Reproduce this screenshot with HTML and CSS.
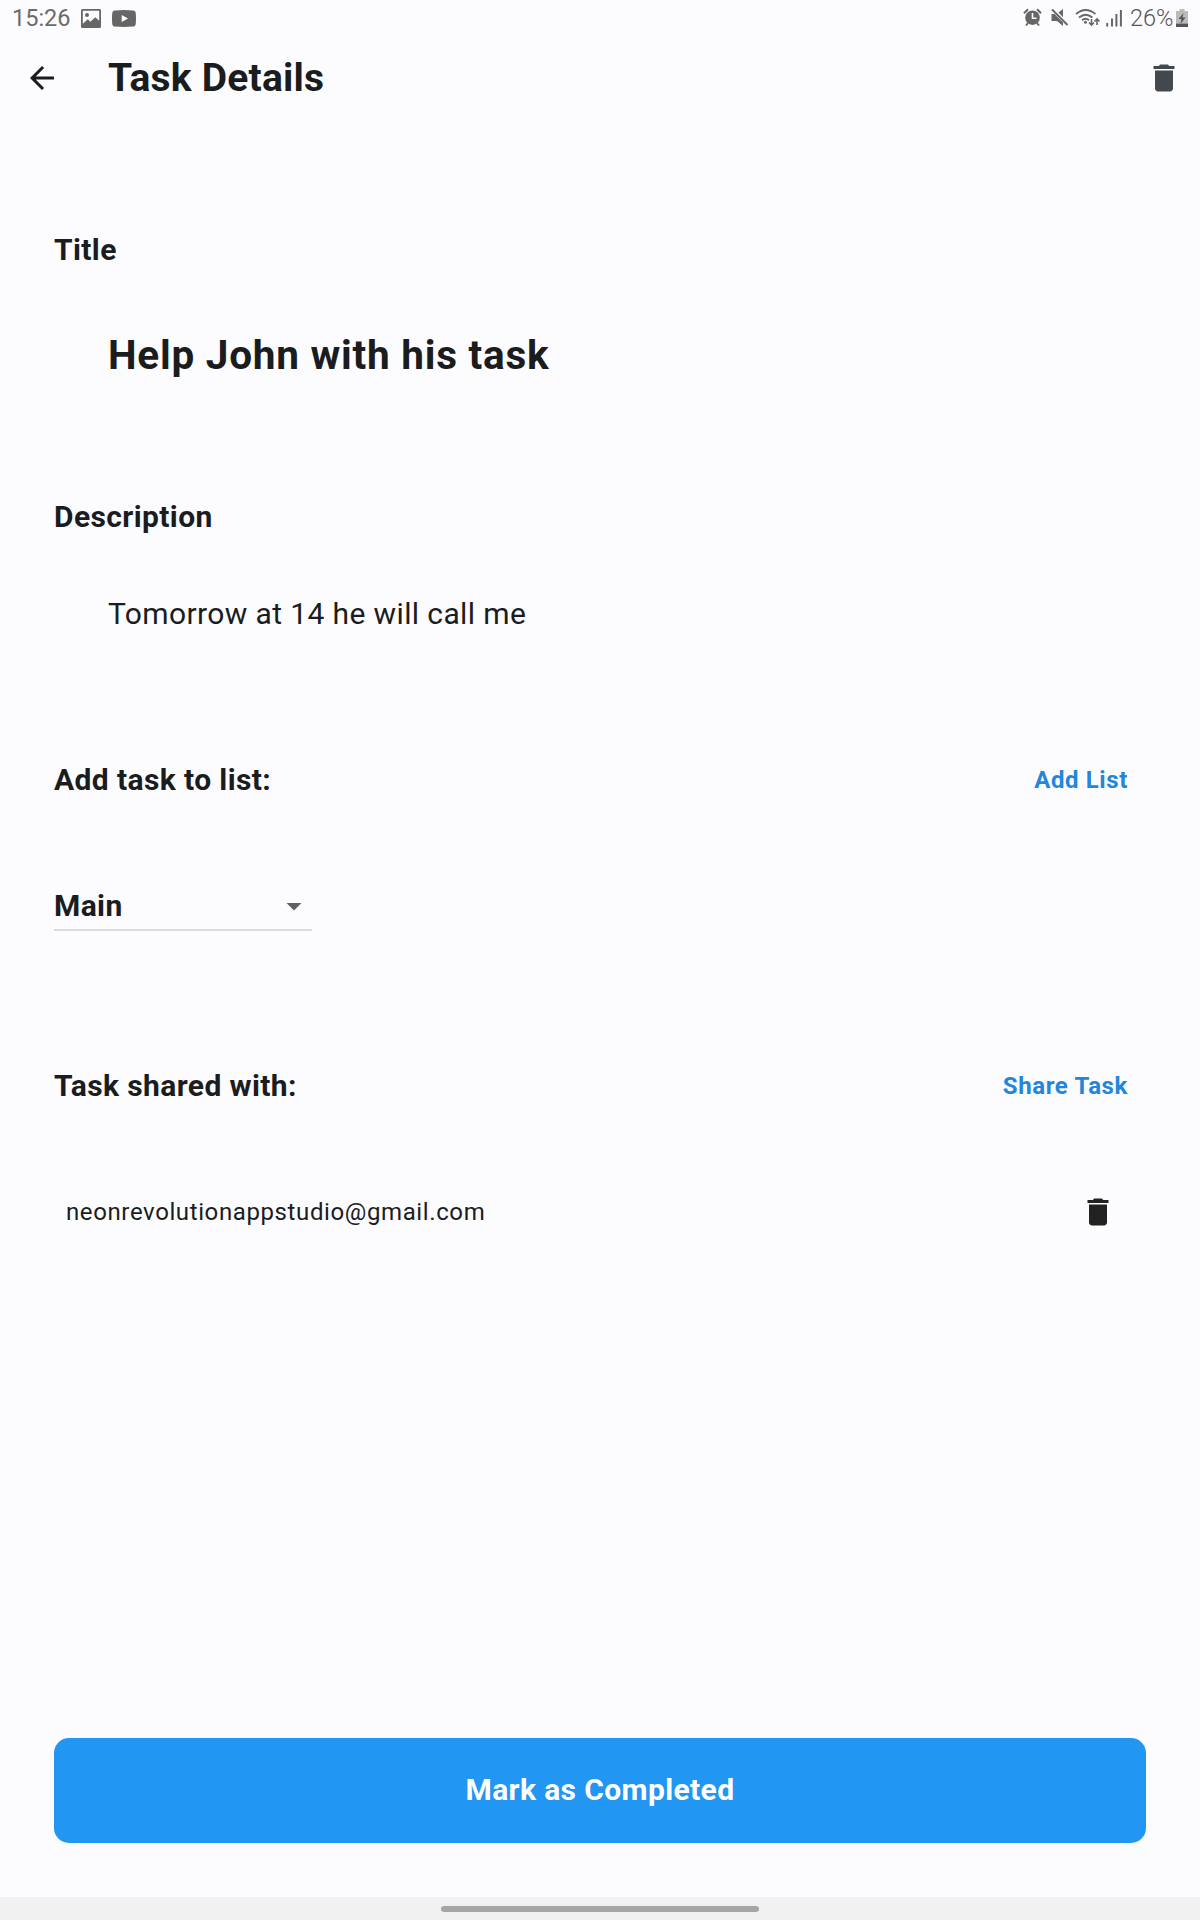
FILE: index.html
```
<!DOCTYPE html>
<html lang="en">
<head>
<meta charset="utf-8">
<title>Task Details</title>
<link rel="stylesheet" href="styles.css">
</head>
<body>
<div class="screen">
  <div class="status">
    <span class="clock">15:26</span>
    <svg class="ic-photo" width="20" height="19" viewBox="0 0 20 19"><path fill="#666" fill-rule="evenodd" d="M1.500 0h17A1.500 1.500 0 0 1 20 1.500v16a1.500 1.500 0 0 1-1.500 1.500h-17A1.500 1.500 0 0 1 0 17.500v-16A1.500 1.500 0 0 1 1.500 0zM1.800 1.800v13l5-4.600 2.500 2.500 5-4.500 3.900 3.600v-10zM6 4a2 2 0 1 1 0 4 2 2 0 0 1 0-4z"/></svg>
    <svg class="ic-video" width="24" height="17" viewBox="0 0 24 17"><path fill="#666" fill-rule="evenodd" d="M3 .4Q12-.4 21 .4q2.600.2 2.800 3 .4 5 0 10-.2 2.900-2.800 3.200-9 .8-18 0-2.600-.3-2.800-3.200-.4-5 0-10Q.4.600 3 .4zM9.700 5v7l6.300-3.500z"/></svg>
    <span class="grow"></span>
    <svg width="106" height="36" viewBox="1018 0 106 36">
      <g fill="none" stroke="#666" stroke-width="1.600">
        <circle cx="1032.500" cy="17.700" r="7.300" fill="#666" stroke="none"/>
        <path stroke="#fcfcff" d="M1032.500 13V18.300H1036.500"/>
        <path d="M1024 13.200l4-4M1041 13.200l-4-4M1028 23l-2 2.500M1037 23l2 2.500" stroke-width="2"/>
        <path fill="#666" stroke="none" d="M1063 9v8l-4.500-4.500zM1051.500 14h3l8.500 8.500v3.500l-6-5h-5.500z"/>
        <path d="M1052 9.500l15.500 15.500" stroke-width="2"/>
        <path d="M1076 14q9.700-8 19.400 0M1079 17.500q6.700-5.600 13.400 0M1082 20.300q3.500-3 7 0" stroke-width="1.800"/>
        <circle cx="1085.500" cy="22.300" r="1.500" fill="#666" stroke="none"/>
        <path d="M1091.500 19v6M1089 22.500l2.500 2.500 2.500-2.500M1097 25v-6M1094.500 21.500l2.500-2.500 2.500 2.500"/>
        <path d="M1107.200 23v3.500M1112 18.500v8M1116.400 14v12.500M1120.900 10v16.500" stroke-width="2"/>
      </g>
    </svg>
    <span class="percent">26%</span>
    <svg width="12" height="18" viewBox="0 0 12 18"><path fill="#bbb" d="M3.500 0h5v2H12v12.500H0V2h3.500z"/><path fill="#555" d="M0 14.500h12V18H0zM7.500 4L2.500 10h3L4.500 15l5-6.500h-3z"/></svg>
  </div>

  <header class="bar">
    <svg class="icon" viewBox="0 0 24 24"><path fill="#1a1c1e" d="M20 11H7.830l5.590-5.590L12 4l-8 8 8 8 1.410-1.410L7.830 13H20z"/></svg>
    <h1>Task Details</h1>
    <svg class="icon" viewBox="0 0 24 24"><path fill="#43474e" d="M6 19c0 1.100.9 2 2 2h8c1.100 0 2-.9 2-2V7H6zM19 4h-3.500l-1-1h-5l-1 1H5v2h14z"/></svg>
  </header>

  <main>
    <h2>Title</h2>
    <p class="task-title">Help John with his task</p>
    <h2>Description</h2>
    <p class="task-text">Tomorrow at 14 he will call me</p>
    <div class="row"><h2>Add task to list:</h2><a class="link">Add List</a></div>
    <div class="select"><span>Main</span><svg class="icon" viewBox="0 0 24 24"><path fill="#616161" d="M7 10l5 5 5-5z"/></svg></div>
    <div class="row"><h2>Task shared with:</h2><a class="link">Share Task</a></div>
    <div class="person"><span>neonrevolutionappstudio@gmail.com</span><svg class="icon" viewBox="0 0 24 24"><path fill="#212121" d="M6 19c0 1.100.9 2 2 2h8c1.100 0 2-.9 2-2V7H6zM19 4h-3.500l-1-1h-5l-1 1H5v2h14z"/></svg></div>
    <button class="complete">Mark as Completed</button>
  </main>
  <div class="nav"><div class="pill"></div></div>
</div>
</body>
</html>
```
FILE: styles.css
```
* { box-sizing: border-box; margin: 0; }
body { background: #fcfcff; color: #1a1c1e; font-family: Roboto, sans-serif; }
.screen { width: 1200px; height: 1920px; display: flex; flex-direction: column; overflow: hidden; }
svg { display: block; flex: none; }
.icon { width: 36px; height: 36px; }
.grow { flex: 1; }

.status { height: 36px; display: flex; align-items: center; padding: 0 12px; color: #6b6b6b; font-size: 23.5px; line-height: 38px; }
.clock { width: 69px; }
.ic-video { margin-left: 11px; }
.percent { width: 46px; margin-left: 6px; font-weight: 300; color: #555; }

.bar { height: 84px; display: flex; align-items: center; padding: 0 18px 0 24px; }
.bar h1 { flex: 1; margin-left: 48px; font-size: 39px; font-weight: 700; line-height: 50px; letter-spacing: .2px; }

main { flex: 1; padding: 112px 54px 54px; display: flex; flex-direction: column; }
h2, .select span { font-size: 30px; font-weight: 700; line-height: 36px; letter-spacing: .39px; }
.task-title { margin: 62px 0 119px 54px; font-size: 40.5px; font-weight: 700; line-height: 50px; letter-spacing: .76px; }
.task-text { margin: 61px 0 130px 54px; font-size: 30px; line-height: 36px; letter-spacing: .38px; }
.row { display: flex; justify-content: space-between; align-items: center; padding-right: 18px; height: 36px; }
.link { color: #2386dc; font-size: 24px; font-weight: 700; letter-spacing: .62px; }
.select { display: flex; justify-content: space-between; align-items: flex-start; width: 258px; height: 43px; margin: 90px 0 137px; border-bottom: 2px solid #dcdcde; }
.person { display: flex; justify-content: space-between; align-items: center; height: 36px; margin: 90px 30px 0 12px; font-size: 24px; letter-spacing: .61px; }
.complete { margin-top: auto; height: 105px; padding: 0 0 2px; border: 0; border-radius: 15px; background: #2196f3; color: #fff; font: 700 30px Roboto, sans-serif; letter-spacing: .38px; }
.nav { height: 23px; background: #f1f1f1; padding-top: 9px; }
.pill { width: 318px; height: 6px; margin: 0 auto; border-radius: 3px; background: #a6a6a6; }
```
